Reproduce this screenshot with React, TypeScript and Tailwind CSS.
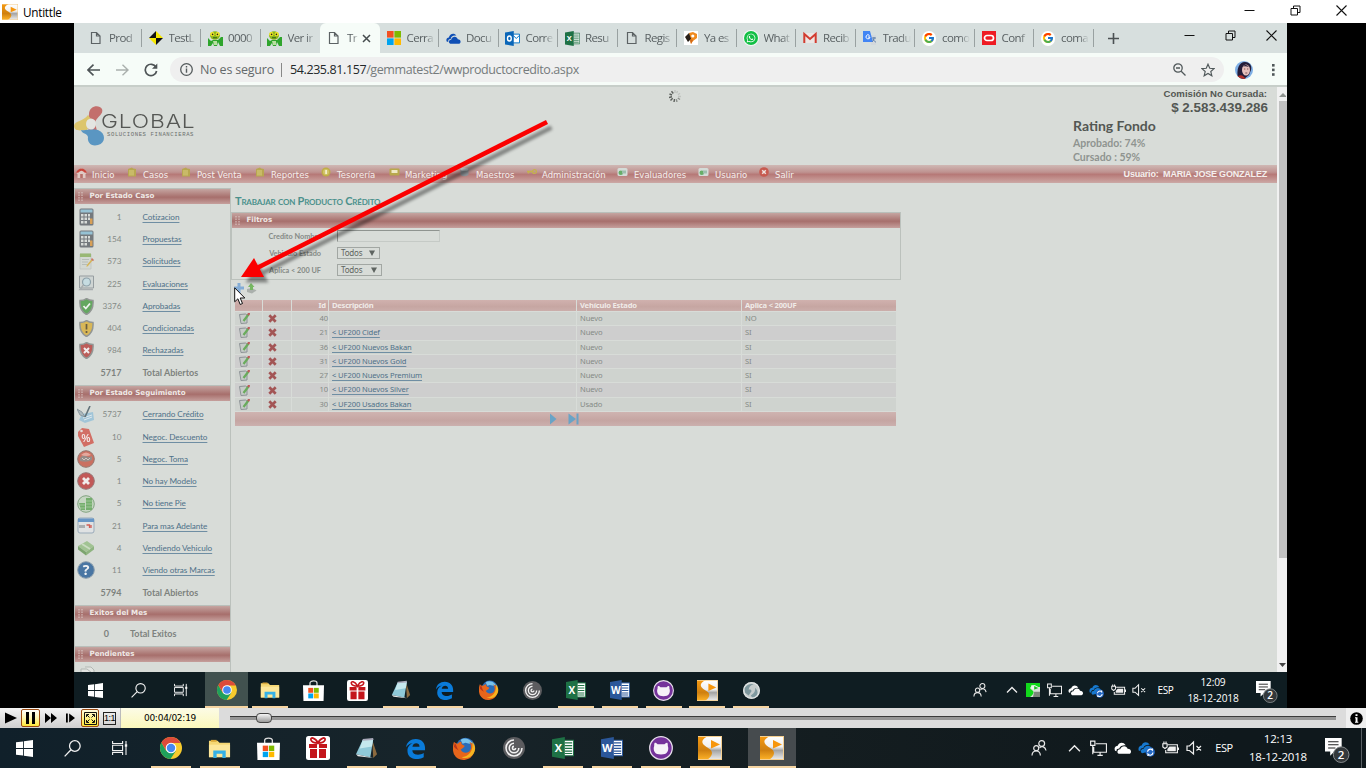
import React from "react";
import { FcGoogle } from "react-icons/fc";
import { FaWhatsapp } from "react-icons/fa";

type IconProps = { size?: number };
type Icon = (p: IconProps) => React.ReactElement;

const svg = (size: number, box: string, children: React.ReactNode, extra = "") => (
  <svg width={size} height={size} viewBox={box} className={`block shrink-0 ${extra}`}>
    {children}
  </svg>
);

/* ---------- application icons ---------- */

const RecorderIcon: Icon = ({ size = 24 }) =>
  svg(size, "0 0 24 24", (
    <>
      <defs>
        <linearGradient id="rg" x1="0" y1="0" x2="0" y2="1">
          <stop offset="0" stopColor="#ffffff" />
          <stop offset=".45" stopColor="#f0f0f0" />
          <stop offset=".6" stopColor="#a4a4a4" />
          <stop offset="1" stopColor="#f0f0f0" />
        </linearGradient>
        <linearGradient id="ro" x1="0" y1="0" x2="0" y2="1">
          <stop offset="0" stopColor="#f79a10" />
          <stop offset=".6" stopColor="#cf8010" />
          <stop offset="1" stopColor="#ffb428" />
        </linearGradient>
      </defs>
      <rect width="24" height="24" fill="url(#rg)" />
      <path d="M0 0H10C4 3 3 6 6 9c3 3 8 4 8 8 0 3-3 6-6 7H0z" fill="url(#ro)" />
      <path d="M13 4l9 4.500-9 4z" fill="#f7960c" />
      <path d="M0 .5h24M0 23.500h24M23.500 0v24" stroke="#f5cf90" strokeWidth="1" />
    </>
  ));

const GreenRecorder: Icon = ({ size = 14 }) =>
  svg(size, "0 0 24 24", (
    <>
      <rect width="24" height="24" fill="#d9e0d9" />
      <path d="M0 0H24V7h-4l-5-3-5 1-3 3c0 3 6 4 6 8 0 3-3 6-6 8H0z" fill="#12d81c" />
      <path d="M9 4h6l6 3-6 5-6-2z" fill="#eef6ee" />
      <path d="M14 5l7 3.500-7 3z" fill="#18c022" />
      <path d="M14 15h10v9H12z" fill="#7b857b" />
    </>
  ));

const WindowsIcon: Icon = ({ size = 16 }) =>
  svg(size, "0 0 16 16", (
    <path d="M0 2.200l6.600-.9v6.200H0zM7.400 1.200L16 0v7.500H7.400zM0 8.400h6.600v6.300L0 13.800zM7.400 8.400H16V16l-8.600-1.200z" fill="#fff" />
  ));

const SearchGlyph: Icon = ({ size = 16 }) =>
  svg(size, "0 0 16 16", (
    <g fill="none" stroke="#f2f2f2" strokeWidth="1.200">
      <circle cx="10.200" cy="5.600" r="5" />
      <path d="M6.600 9.200L.6 15.400" />
    </g>
  ));

const TaskViewGlyph: Icon = ({ size = 16 }) =>
  svg(size, "0 0 16 16", (
    <g fill="none" stroke="#f2f2f2" strokeWidth="1.100">
      <path d="M.6 1v2.500h10V1M.6 15v-2.500h10V15M.6 5.200h10v5.400H.6zM14 1v14" />
      <path d="M12.800 5.500h2.400" strokeWidth="2.400" />
    </g>
  ));

const ChromeIcon: Icon = ({ size = 22 }) =>
  svg(size, "0 0 24 24", (
    <>
      <circle cx="12" cy="12" r="12" fill="#f7cb2d" />
      <path d="M1.600 6A12 12 0 0 0 11.500 24L17 15.500 12 12 7 15.500z" fill="#1fa05c" />
      <path d="M12 0A12 12 0 0 1 22.400 6.500H12L6.800 15 1.600 6A12 12 0 0 1 12 0z" fill="#dd4b3a" />
      <circle cx="12" cy="12" r="5.800" fill="#fff" />
      <circle cx="12" cy="12" r="4.600" fill="#4688f1" />
    </>
  ));

const FolderIcon: Icon = ({ size = 22 }) =>
  svg(size, "0 0 24 24", (
    <>
      <path d="M1 4h9l2 2h11v15H1z" fill="#f5d774" />
      <path d="M1 8h22v13H1z" fill="#fde79a" />
      <path d="M3 3h6v2H3z" fill="#dba93a" />
      <path d="M5.500 22v-8h13v8h-3.500v-4.500h-6V22z" fill="#35b1e6" />
    </>
  ));

const StoreIcon: Icon = ({ size = 23 }) =>
  svg(size, "0 0 24 24", (
    <>
      <path d="M8 7V3.500C8 .3 16 .3 16 3.500V7" fill="none" stroke="#ddd" strokeWidth="1.400" />
      <path d="M0 6h24l-.5 18H.5z" fill="#fff" />
      <path d="M6 9h5.600v5.600H6z" fill="#f25022" />
      <path d="M12.400 9H18v5.600h-5.600z" fill="#7fba00" />
      <path d="M6 15.400h5.600V21H6z" fill="#00a4ef" />
      <path d="M12.400 15.400H18V21h-5.600z" fill="#ffb900" />
    </>
  ));

const GiftIcon: Icon = ({ size = 24 }) =>
  svg(size, "0 0 24 24", (
    <>
      <rect width="24" height="24" rx="2.500" fill="#fff" />
      <path d="M3 8h8v4H3zM13 8h8v4h-8zM4 13h7v9H4zM13 13h7v9h-7z" fill="#c4161c" />
      <path d="M12 7C9 1 4 1 5 4s4 3 7 3c3 0 6 0 7-3s-4-3-7 3z" fill="none" stroke="#c4161c" strokeWidth="1.800" />
    </>
  ));

const NotepadIcon: Icon = ({ size = 22 }) =>
  svg(size, "0 0 24 24", (
    <>
      <path d="M18 3l5 15-4 4z" fill="#8b6a3f" />
      <path d="M8 3l11-1-3 19-15-3z" fill="#8fc9d8" />
      <path d="M8 3l11-1-1.300 8L5 12z" fill="#c5e8ee" />
      <path d="M1 18l15 3 3 1-16-2z" fill="#e8e8e8" />
      <path d="M8 2l11-1v2L8 4z" fill="#aab" />
    </>
  ));

const EdgeIcon: Icon = ({ size = 22 }) =>
  svg(size, "0 0 24 24", (
    <path d="M1.200 10.700C2 4.500 6.500 1 12.300 1c7 0 10.600 5 10.600 10.200v2.800H8.400c.2 6.200 8.600 6 13 3.200v4.700C14 26.300 2.800 24.200 2.800 14.500c0-4.200 2.700-7.300 6-8.700C5.500 6.300 2.900 7.900 1.200 10.700zM8.500 9.900h8.100c0-5.200-7.500-4.900-8.100 0z" fill="#0a7bd9" />
  ));

const FirefoxIcon: Icon = ({ size = 23 }) =>
  svg(size, "0 0 24 24", (
    <>
      <circle cx="13" cy="10.500" r="9.800" fill="#2a6cb8" />
      <path d="M8 3c4-3 10-1 12 3l-3 1-4-1-3 1z" fill="#79c3ea" />
      <path d="M1 5c1 1 2 2 4 2 1-1 2-2 4-2-1 2 0 3 3 4 1 1-2 3-4 4 2 4 6 4 9 2 3-3 2-7 0-10 5 2 6 7 5 11a11.500 11.500 0 0 1-21 2C-1 13 0 8 1 5z" fill="#e7651b" />
      <path d="M20 5c4 4 4 9 1 13s-8 5-12 3c7 0 13-7 11-16z" fill="#f6b420" />
      <path d="M2 6c2 3 2 6 4 8-2-1-4-2-5-4z" fill="#b8341b" />
    </>
  ));

const SwirlIcon: Icon = ({ size = 22 }) =>
  svg(size, "0 0 24 24", (
    <>
      <circle cx="12" cy="12" r="12" fill="#5c5c5f" />
      <path d="M12 3.300a8.700 8.700 0 1 0 8.700 8.700M12 6.800a5.200 5.200 0 1 0 5.200 5.200M12 10.200a1.800 1.800 0 1 0 1.800 1.800" fill="none" stroke="#f2f2f2" strokeWidth="1.700" />
    </>
  ));

const OfficeIcon = (letter: string, color: string, dark: string): Icon =>
  function Office({ size = 22 }) {
    return svg(size, "0 0 24 24", (
      <>
        <path d="M12 3.500h11.500v17H12z" fill="#fff" stroke={color} strokeWidth="1.200" />
        <path d="M14 6.500h8M14 9.500h8M14 12.500h8M14 15.500h8M14 18h8" stroke={color} strokeWidth="1.300" />
        <path d="M0 2.500L14 0v24L0 21.500z" fill={dark} />
        <text x="7" y="16.500" textAnchor="middle" fontSize="12" fontWeight="700" fontFamily="Open Sans, sans-serif" fill="#fff">{letter}</text>
      </>
    ));
  };
const ExcelIcon = OfficeIcon("X", "#217346", "#1e7145");
const WordIcon = OfficeIcon("W", "#2b579a", "#2b579a");
const OutlookIcon: Icon = ({ size = 15 }) =>
  svg(size, "0 0 24 24", (
    <>
      <path d="M12 5h11.300v14H12z" fill="#fff" stroke="#0072c6" strokeWidth="1.500" />
      <path d="M13 7l5 5 5-5" fill="none" stroke="#0072c6" strokeWidth="1.600" />
      <path d="M0 2.500L14 0v24L0 21.500z" fill="#0a66b8" />
      <ellipse cx="7" cy="12" rx="3" ry="4" fill="none" stroke="#fff" strokeWidth="2.200" />
    </>
  ));

const GitHubIcon: Icon = ({ size = 24 }) =>
  svg(size, "0 0 24 24", (
    <>
      <circle cx="12" cy="12" r="11.300" fill="#75329b" stroke="#e5dcea" strokeWidth="1.300" />
      <path d="M5.500 7c1-.5 2 .3 3 1.200h7c1-1 2-1.700 3-1.200.4 1 .3 2 .3 3 1 2 .6 7-3 8-2 .6-5.600.6-7.600 0-3.600-1-4-6-3-8 0-1-.1-2 .3-3z" fill="#f6f2f8" />
    </>
  ));

const GlobeIcon: Icon = ({ size = 18 }) =>
  svg(size, "0 0 24 24", (
    <>
      <circle cx="12" cy="12" r="12" fill="#c6cccc" />
      <path d="M2 9c3-5 8-7 13-6-4 1-7 4-7 8 2-1 4 0 4 2l-4 6-5-4z" fill="#7d969c" />
      <path d="M11 19c5-3 7-7 6-11 6 5 4 13-4 14z" fill="#7f999f" />
      <circle cx="12" cy="12" r="11" fill="none" stroke="#e1e5e5" strokeWidth="1.500" />
    </>
  ));

/* ---------- tray icons ---------- */

const PeopleGlyph: Icon = ({ size = 14 }) =>
  svg(size, "0 0 16 16", (
    <g fill="none" stroke="#e8e8e8" strokeWidth="1.200">
      <circle cx="10.700" cy="3.500" r="2.900" />
      <circle cx="5.200" cy="8.200" r="2.500" />
      <path d="M8.500 8c2-2.500 6-1.500 6.500 2.500M1 15.500c.3-6 8-6 8.400 0" />
    </g>
  ));
const ChevronGlyph: Icon = ({ size = 12 }) =>
  svg(size, "0 0 12 12", <path d="M1 8.500l5-5 5 5" fill="none" stroke="#eee" strokeWidth="1.300" />);
const MonitorGlyph: Icon = ({ size = 15 }) =>
  svg(size, "0 0 16 16", (
    <g fill="none" stroke="#eee" strokeWidth="1.100">
      <path d="M5.500 3.500h10v8h-12v-5M7 14.500h5M9.500 11.500v3M.6 1h4v4h-4zM2.600 5v8.500" />
    </g>
  ));
const CloudGlyph: Icon = ({ size = 15 }) =>
  svg(size, "0 0 16 16", (
    <>
      <path d="M1 10C-.5 7 2 5.500 3.500 5.500 4.500 2 9 1.500 11 5c-4 0-5 1-6 3-2 0-3 1-2.500 2.500z" fill="#fff" />
      <path d="M4.500 13c-2.500-1-1-4.500 1.300-4.200C7 4.800 12 5 12.800 8.200c4 0 4 4.500 1.400 4.800z" fill="#fff" />
    </>
  ));
const OneDriveSync: Icon = ({ size = 16 }) =>
  svg(size, "0 0 16 16", (
    <>
      <path d="M.8 10C-.5 7 2 5 3.500 5.200 4.500 1.500 9 1 11 4.500c-4 0-5 1-6 3-2 0-3 1-2.500 2.500z" fill="#1779cf" />
      <path d="M4 12.500c-2.500-1-1-4.500 1.300-4.200C6.500 4.500 12 4.500 12.800 7.700l2 2z" fill="#1779cf" />
      <circle cx="11.500" cy="11.300" r="4.400" fill="#2368c4" />
      <path d="M9 11a2.600 2.600 0 0 1 4.500-1.500V8M14 11.700a2.600 2.600 0 0 1-4.600 1.700V15" fill="none" stroke="#fff" strokeWidth="1.100" />
    </>
  ));
const BatteryGlyph: Icon = ({ size = 16 }) =>
  svg(size, "0 0 16 16", (
    <>
      <path d="M5.500 4.500h9v7.500h-11v-2.500M.8 3.500h4v3l-2 1.500-2-1.500zM1.800 3.500V1.500M3.800 3.500V1.500M15.600 7v2.500" fill="none" stroke="#eee" strokeWidth="1.100" />
      <path d="M7 6h6v4.500H5V8.500z" fill="#eee" />
    </>
  ));
const MutedGlyph: Icon = ({ size = 15 }) =>
  svg(size, "0 0 16 16", (
    <path d="M1 6h2.500L7.500 2v12L3.500 10.500H1zM10.500 6l4.500 4.500M15 6l-4.500 4.500" fill="none" stroke="#eee" strokeWidth="1.200" />
  ));
const NotificationGlyph: Icon = ({ size = 24 }) =>
  svg(size, "0 0 24 24", (
    <>
      <path d="M0 0h16v13H9l-4 4v-4H0z" fill="#fff" />
      <path d="M3 3.500h10M3 6.500h10M3 9.500h7" stroke="#222" strokeWidth="1" />
      <circle cx="15.500" cy="16" r="7.500" fill="#33383b" stroke="#8b9092" strokeWidth=".9" />
      <text x="15.500" y="20" textAnchor="middle" fontSize="11" fontWeight="600" fontFamily="Open Sans, sans-serif" fill="#fff">2</text>
    </>
  ));

/* ---------- tab icons ---------- */

const DocIcon: Icon = () =>
  svg(14, "0 0 14 14", <path d="M2.500 1.500h5l3.500 3.500v7.500H2.500zM7.500 1.500V5H11" fill="none" stroke="#5c6264" strokeWidth="1.200" />);
const TargetIcon: Icon = () =>
  svg(14, "0 0 14 14", (
    <>
      <path d="M7 0l7 7H7z" fill="#f6e800" /><path d="M7 0v7H0z" fill="#111" />
      <path d="M0 7h7v7z" fill="#f6e800" /><path d="M7 7h7l-7 7z" fill="#111" />
    </>
  ));
const MantisIcon: Icon = () =>
  svg(15, "0 0 15 15", (
    <>
      <path d="M0 7l3 3 2-1h5l3-3 2 0v9h-3l-2-4-1 4H6l-1-3-2 3H0z" fill="#2fa52d" />
      <path d="M5 10h4v4H6z" fill="#b8e0a0" />
      <ellipse cx="7" cy="4.500" rx="5" ry="4.200" fill="#8db81c" />
      <circle cx="4.300" cy="3.200" r="2.100" fill="#f0e629" /><circle cx="9.700" cy="3.200" r="2.100" fill="#f0e629" />
      <circle cx="4.600" cy="3.400" r=".8" fill="#222" /><circle cx="9.400" cy="3.400" r=".8" fill="#222" />
      <path d="M5 6.800h4" stroke="#2b5c18" strokeWidth="1" />
    </>
  ));
const MicrosoftIcon: Icon = () =>
  svg(14, "0 0 14 14", (
    <>
      <path d="M0 0h6.600v6.600H0z" fill="#f25022" /><path d="M7.400 0H14v6.600H7.400z" fill="#7fba00" />
      <path d="M0 7.400h6.600V14H0z" fill="#00a4ef" /><path d="M7.400 7.400H14V14H7.400z" fill="#ffb900" />
    </>
  ));
const OneDriveTab: Icon = () =>
  svg(15, "0 0 16 16", (
    <>
      <path d="M1 11.500C-.5 9 1 7 3 7 4 2.500 9 1.500 11 5c-4-.5-5.500 1-6 3.500-2 0-3 1.500-2.500 3z" fill="#0f4fb5" />
      <path d="M4.500 13.500c-2.500-1-1.500-4.500 1-4.200C6.500 5 12 5.500 12.500 8.800c3.500 0 4 4 1.500 4.700z" fill="#0f4fb5" />
    </>
  ));
const FoxIcon: Icon = () =>
  svg(14, "0 0 14 14", (
    <>
      <path d="M0 0h14v14H0z" fill="#fff" />
      <path d="M5 2l4-1 4 2v4l-4 3-2 3-1-3z" fill="#f08a1d" />
      <path d="M1 6l4-4 1 3 1 3-3 3z" fill="#292018" />
      <path d="M6 8l3 1-2 4z" fill="#d06818" />
      <circle cx="8.800" cy="5" r="1.600" fill="#fff" />
    </>
  ));
const WhatsAppTab: Icon = () => (
  <span className="flex size-[14px] items-center justify-center rounded-full bg-[#12bf45] ring-1 ring-white/80">
    <FaWhatsapp size={10} color="#fff" />
  </span>
);
const GmailIcon: Icon = () =>
  svg(14, "0 0 14 14", (
    <>
      <path d="M1 2h12v10H1z" fill="#ece6e4" />
      <path d="M1.300 12V3L7 8l5.700-5v9" fill="none" stroke="#d23c30" strokeWidth="2" />
    </>
  ));
const TranslateIcon: Icon = () =>
  svg(14, "0 0 14 14", (
    <>
      <path d="M6 4h7v10H8z" fill="#d3d8dc" />
      <path d="M0 0h7l3 11H0z" fill="#4285f4" />
      <path d="M9 7h4M11 6v1c0 2-1 3-2 4M10 8c1 2 2 3 3 3" stroke="#5d7fa8" fill="none" />
      <path d="M6.500 4.500A2 2 0 1 0 7 6H5" fill="none" stroke="#fff" strokeWidth="1" />
    </>
  ));
const GoogleTab: Icon = () => (
  <span className="flex size-[15px] items-center justify-center rounded-full bg-white">
    <FcGoogle size={12} />
  </span>
);
const OracleIcon: Icon = () =>
  svg(14, "0 0 14 14", (
    <>
      <path d="M0 0h14v14H0z" fill="#ee1b23" />
      <rect x="2.500" y="4.500" width="9" height="5" rx="2.500" fill="none" stroke="#fff" strokeWidth="1.700" />
    </>
  ));

const tabs: { icon: Icon; label: string; active?: boolean }[] = [
  { icon: DocIcon, label: "Prod" },
  { icon: TargetIcon, label: "TestL" },
  { icon: MantisIcon, label: "0000" },
  { icon: MantisIcon, label: "Ver ir" },
  { icon: DocIcon, label: "Tr", active: true },
  { icon: MicrosoftIcon, label: "Cerra" },
  { icon: OneDriveTab, label: "Docu" },
  { icon: OutlookIcon, label: "Corre" },
  { icon: ExcelIcon, label: "Resu" },
  { icon: DocIcon, label: "Regis" },
  { icon: FoxIcon, label: "Ya es" },
  { icon: WhatsAppTab, label: "What" },
  { icon: GmailIcon, label: "Recib" },
  { icon: TranslateIcon, label: "Tradu" },
  { icon: GoogleTab, label: "como" },
  { icon: OracleIcon, label: "Conf" },
  { icon: GoogleTab, label: "coma" },
];

function WindowButtons({ gap }: { gap: string }) {
  return (
    <div className={`flex items-center ${gap}`}>
      <svg width="11" height="11" viewBox="0 0 11 11"><path d="M.5 5.500h10" stroke="#111" /></svg>
      <svg width="11" height="11" viewBox="0 0 11 11"><path d="M1 3.500h6.500V10H1zM3.500 3.500V1H10v6.500H7.500" fill="none" stroke="#111" /></svg>
      <svg width="11" height="11" viewBox="0 0 11 11"><path d="M.5.500l10 10M10.500.500l-10 10" stroke="#111" strokeWidth="1.100" /></svg>
    </div>
  );
}

function Chrome() {
  return (
    <>
      <div className="flex h-[30px] bg-[#d7dfde] pl-2 font-['Open_Sans',sans-serif]">
        {tabs.map(({ icon: I, label, active }, i) => (
          <div
            key={i}
            className={
              active
                ? "flex h-[30px] w-[59.5px] shrink-0 items-center rounded-t-[6px] bg-[#f6fcf8] pl-[7px]"
                : "flex h-[30px] w-[59.5px] shrink-0 items-center pl-[7px]"
            }
          >
            <span className="flex w-[14px] shrink-0 justify-center"><I size={15} /></span>
            <span className={`${active ? "w-[12px] [mask-image:linear-gradient(to_right,#000_45%,transparent)]" : "w-[28px] [mask-image:linear-gradient(to_right,#000_65%,transparent)]"} ml-[6px] flex h-4 shrink-0 items-center text-[11.500px] tracking-[-0.600px] whitespace-nowrap text-[#5a6163]`}>
              {label}
            </span>
            {active ? (
              <svg width="9" height="9" viewBox="0 0 9 9" className="ml-[3px]"><path d="M1 1l7 7M8 1L1 8" stroke="#454b4d" strokeWidth="1.500" /></svg>
            ) : (
              i !== 3 && <span className="ml-auto h-[18px] w-px bg-[#99a1a1]" />
            )}
          </div>
        ))}
        <svg width="11" height="11" viewBox="0 0 11 11" className="mt-[10px] ml-[14px]"><path d="M5.500 0v11M0 5.500h11" stroke="#4b5153" strokeWidth="1.600" /></svg>
        <div className="mt-[7px] ml-auto mr-[10px] h-[11px]"><WindowButtons gap="gap-[30px]" /></div>
      </div>
      <div className="flex h-[32px] items-center bg-[#f6fcf8] pt-px pr-3 pl-[13px] font-['Open_Sans',sans-serif]">
        <svg width="13" height="12" viewBox="0 0 13 12"><path d="M13 6H1M6.500.700L1 6l5.500 5.300" fill="none" stroke="#4e5456" strokeWidth="1.600" /></svg>
        <svg width="13" height="12" viewBox="0 0 13 12" className="ml-4"><path d="M0 6h12M6.500.700L12 6l-5.500 5.300" fill="none" stroke="#aab0ad" strokeWidth="1.400" /></svg>
        <svg width="14" height="14" viewBox="0 0 14 14" className="ml-[15px]"><path d="M12 4.200A5.700 5.700 0 1 0 12.600 8" fill="none" stroke="#4e5456" strokeWidth="1.700" /><path d="M13.300.500v5.300H8z" fill="#4e5456" /></svg>
        <div className="ml-3 flex h-[25px] w-[1054px] items-center rounded-full bg-[#efefef] pr-[9px] pl-[10px]">
          <svg width="13" height="13" viewBox="0 0 13 13"><circle cx="6.500" cy="6.500" r="5.800" fill="none" stroke="#555b5d" strokeWidth="1.300" /><path d="M6.500 5.500v4.300M6.500 3v1.400" stroke="#555b5d" strokeWidth="1.400" /></svg>
          <span className="mt-px ml-[7px] w-[74px] text-[12.500px] tracking-[-0.200px] whitespace-nowrap text-[#64696b]">No es seguro</span>
          <span className="ml-[7px] h-[14px] w-px bg-[#888]" />
          <span className="mt-px ml-[8px] text-[12.500px] tracking-[-0.400px] whitespace-nowrap text-[#757b7c]"><span className="text-[#232829]">54.235.81.157</span>/gemmatest2/wwproductocredito.aspx</span>
          <svg width="13" height="13" viewBox="0 0 13 13" className="ml-auto"><g fill="none" stroke="#50585a" strokeWidth="1.300"><circle cx="5" cy="5" r="4.200" /><path d="M8.200 8.200L12.500 12.500M3 5h4" /></g></svg>
          <svg width="14" height="14" viewBox="0 0 24 24" className="ml-[15px]"><path d="M12 2l3 7 7.500.600-5.700 5 1.800 7.400L12 18l-6.600 4 1.800-7.400-5.700-5L9 9z" fill="none" stroke="#50585a" strokeWidth="2" /></svg>
        </div>
        <svg width="18" height="18" viewBox="0 0 18 18" className="ml-[11px]">
          <defs><clipPath id="face"><circle cx="9" cy="9" r="9" /></clipPath></defs>
          <g clipPath="url(#face)">
            <rect width="18" height="18" fill="#7fb0e6" />
            <path d="M3 18C1 8 4 1 10 1c5 0 7 4 6 8l-2 5-5 4z" fill="#231c38" />
            <ellipse cx="11" cy="9" rx="4" ry="5.500" fill="#e6c0bd" />
            <path d="M8 5.500q3-3 6 .5-3-1-6-.5z" fill="#231c38" />
            <path d="M9 8h1.300M12 8h1.300M10.300 12h2" stroke="#74494c" strokeWidth=".9" />
            <path d="M3 15c2-1 4-1 5 0l3 3H3z" fill="#b0302a" />
          </g>
        </svg>
        <svg width="3" height="12" viewBox="0 0 3 12" className="ml-auto"><g fill="#50585a"><rect width="2.600" height="2.600" /><rect y="4.600" width="2.600" height="2.600" /><rect y="9.200" width="2.600" height="2.600" /></g></svg>
      </div>
      <div className="h-[2px] bg-[#c7cec9]" />
    </>
  );
}

/* ---------- menu ---------- */

const HomeM = <svg width="11" height="11" viewBox="0 0 11 11"><path d="M0 5.500L5.500 1 11 5.500 9.500 7V11h-8V7z" fill="#dfc9c4" /><path d="M0 6C2 0 9 0 11 6L8.500 5.500Q5.500 2 2.500 5.500z" fill="#c9463c" /><path d="M4.200 7h2.600v4H4.200z" fill="#b8706a" /></svg>;
const NoteM = <svg width="10" height="10" viewBox="0 0 10 10"><path d="M1 2l4-1.500 1 1 3 .5v7.500H1z" fill="#b8a750" /><path d="M2 3h5v5.500H2z" fill="#c9ba68" /></svg>;
const CoinM = <svg width="10" height="10" viewBox="0 0 10 10"><circle cx="5" cy="5" r="4.500" fill="#bfae45" /><circle cx="5" cy="5" r="3" fill="#d2c46a" /><path d="M4.200 3h1.800v4H4.200z" fill="#f3eec8" /></svg>;
const MailM = <svg width="11" height="10" viewBox="0 0 11 10"><rect x=".5" y="1.500" width="10" height="7" rx="1" fill="#b8a84c" /><rect x="2.500" y="3" width="6" height="3" fill="#efe8c4" /></svg>;
const DbM = <svg width="9" height="10" viewBox="0 0 9 10"><path d="M.5 2h8v6q-4 2.500-8 0z" fill="#8f9499" /><ellipse cx="4.500" cy="2.300" rx="4" ry="1.500" fill="#c4c9cc" /></svg>;
const KeyM = <svg width="10" height="10" viewBox="0 0 10 10"><path d="M0 4.500h6M1.500 4.500v2" stroke="#c4b24c" strokeWidth="1.500" /><circle cx="7.500" cy="4.500" r="1.900" fill="none" stroke="#c4b24c" strokeWidth="1.300" /></svg>;
const EvalM = <svg width="11" height="10" viewBox="0 0 11 10"><rect x=".5" y="1" width="10" height="8" rx="1.500" fill="#d4dcd8" /><circle cx="3.800" cy="5.700" r="2.300" fill="#67ad68" /><path d="M5 3.500h4v3H5z" fill="#9dbfae" /></svg>;
const ExitM = <svg width="10" height="10" viewBox="0 0 10 10"><circle cx="5" cy="5" r="4.800" fill="#c75a50" /><path d="M3.200 3.200l3.600 3.600M6.800 3.200L3.200 6.800" stroke="#efe3e0" strokeWidth="1.500" /></svg>;

const menu = [
  { icon: HomeM, label: "Inicio", cell: "w-[51px]", pad: "ml-[5px]" },
  { icon: NoteM, label: "Casos", cell: "w-[54px]", pad: "ml-[6px]" },
  { icon: NoteM, label: "Post Venta", cell: "w-[74px]", pad: "ml-[6px]" },
  { icon: NoteM, label: "Reportes", cell: "w-[66px]", pad: "ml-[6px]" },
  { icon: CoinM, label: "Tesorería", cell: "w-[68px]", pad: "ml-[6px]" },
  { icon: MailM, label: "Marketing", cell: "w-[71px]", pad: "ml-[5px]" },
  { icon: DbM, label: "Maestros", cell: "w-[67px]", pad: "ml-[7px]" },
  { icon: KeyM, label: "Administración", cell: "w-[90px]", pad: "ml-[5px]" },
  { icon: EvalM, label: "Evaluadores", cell: "w-[81px]", pad: "ml-[6px]" },
  { icon: EvalM, label: "Usuario", cell: "w-[61px]", pad: "ml-[6px]" },
  { icon: ExitM, label: "Salir", cell: "w-[40px]", pad: "ml-[6px]" },
];

/* ---------- sidebar icons ---------- */

const CalcS = <svg width="15" height="18" viewBox="0 0 15 18"><rect x=".5" y=".5" width="14" height="17" rx="1.500" fill="#6a6f74" /><rect x="1.500" y="1.500" width="12" height="3" fill="#8fc0d4" /><path d="M2 6h2.500v2.500H2zM5.500 6H8v2.500H5.500zM9 6h2v2.500H9zM2 9.500h2.500V12H2zM5.500 9.500H8V12H5.500zM2 13h2.500v2.500H2zM5.500 13H8v2.500H5.500zM9 9.500h2V12H9z" fill="#d8dcda" /><path d="M11 10.500h2.500V16H11z" fill="#d99a4a" /></svg>;
const FormS = <svg width="15" height="17" viewBox="0 0 15 17"><path d="M1 1h11v15H1z" fill="#d3d8d3" stroke="#bcc2be" strokeWidth=".8" /><path d="M1 .5h11V4H1z" fill="#93b56b" /><path d="M3 6.500h7M3 9h6M3 11.500h5" stroke="#b4bab5" /><path d="M14 7l-5 6-1.500 1 .3-2 5-6z" fill="#d5b14c" /><path d="M15 7l-2-2-1 1.200 2 2z" fill="#c86a5a" /></svg>;
const LensS = <svg width="17" height="17" viewBox="0 0 17 17"><path d="M1.500 1h14v12H1.500z" fill="#cfd5d3" stroke="#8f979a" /><circle cx="8.500" cy="7" r="4" fill="#c5dce2" stroke="#869ba5" strokeWidth="1.200" /><path d="M5.500 10L2 14.500h13" fill="none" stroke="#a3a9ab" strokeWidth="1.600" /></svg>;
const shield = (fill: string, mark: React.ReactNode) => (
  <svg width="15" height="17" viewBox="0 0 15 17"><path d="M7.500.5Q10 2.500 14 2.500c.5 6-1 11-6.500 14C2 13.500.5 8.500 1 2.500 5 2.500 6 1.500 7.500.5z" fill={fill} stroke="#8b8f8d" strokeWidth="1.500" />{mark}</svg>
);
const OkS = shield("#58a254", <path d="M4.500 8l2.300 2.500L11 5.500" fill="none" stroke="#f3f6f3" strokeWidth="1.800" />);
const WarnS = shield("#d8b34a", <path d="M7.500 4v5.500M7.500 11v2" stroke="#5d5030" strokeWidth="1.700" />);
const BadS = shield("#b9504c", <path d="M5 6l5 5M10 6l-5 5" stroke="#f5eeee" strokeWidth="2" />);
const PenS = <svg width="18" height="17" viewBox="0 0 18 17"><path d="M5 8l11-2 1 8-9 3-6-3z" fill="#9cc3d8" /><path d="M6 12l9-3M7 14l8-3" stroke="#dfeaf0" /><path d="M0 3l5 3 3 5-5-2z" fill="#a9b6bc" stroke="#75858d" strokeWidth=".8" /><path d="M13 0L8 11" stroke="#56676f" strokeWidth="1.600" /></svg>;
const TagS = <svg width="18" height="20" viewBox="0 0 18 20"><path d="M1 5l4-4 7 1 5 14-10 4L1 9z" fill="#d26459" /><circle cx="4.500" cy="4" r="1.300" fill="#e7dedb" /><text x="9" y="14.500" textAnchor="middle" fontSize="10" fontWeight="700" fontFamily="Liberation Sans, sans-serif" fill="#f5eceb">%</text></svg>;
const BallS = <svg width="18" height="18" viewBox="0 0 18 18"><circle cx="9" cy="9" r="8.300" fill="#c96555" stroke="#8d6b63" /><path d="M3 8q3-4 6-2t6 0v4q-5 3-12 1z" fill="#918480" /><path d="M5 8l2 2 2-2 2 2 2-2" fill="none" stroke="#cfc5c0" /><path d="M4 5Q9 0 14 5 9 7 4 5z" fill="#e7a397" /></svg>;
const CrossS = <svg width="18" height="18" viewBox="0 0 18 18"><circle cx="9" cy="9" r="8.300" fill="#c04b4b" stroke="#8f6a6a" /><path d="M6 6l6 6M12 6l-6 6" stroke="#f3eeee" strokeWidth="2.800" /></svg>;
const BillsS = <svg width="18" height="18" viewBox="0 0 18 18"><circle cx="9" cy="9" r="8.300" fill="#c3d6c0" stroke="#799d77" /><path d="M2 8h6v7H4zM9 3h6v12H9z" fill="#6aaa62" /><path d="M2 10h6M9 6h7M9 9h7M9 12h6M3 13h5" stroke="#a3cc9c" strokeWidth=".8" /></svg>;
const CalS = <svg width="18" height="17" viewBox="0 0 18 17"><rect x="1" y="1" width="16" height="15" rx="2" fill="#e0e3e5" stroke="#93a5b5" /><path d="M1 1.500h16V5H1z" fill="#5b8fc4" /><path d="M3 8v3M5 8v3M7 8v3" stroke="#6a7075" /><path d="M9.500 8h3v3M14 8v3" fill="none" stroke="#cf5148" strokeWidth="1.300" /></svg>;
const CashS = <svg width="18" height="16" viewBox="0 0 18 16"><path d="M1 6l9-5 7 5-8 6z" fill="#9cc18c" /><path d="M1 6l8 6v3.500L1 9.500z" fill="#739f64" /><path d="M9 12l8-6v3.500l-8 6z" fill="#86b077" /><path d="M5 4l8 5" stroke="#c9dcbf" strokeWidth="1.800" /></svg>;
const HelpS = <svg width="18" height="18" viewBox="0 0 18 18"><circle cx="9" cy="9" r="8.300" fill="#3a6c9e" stroke="#8397a8" /><text x="9" y="14" textAnchor="middle" fontSize="14" fontWeight="700" fontFamily="Open Sans, sans-serif" fill="#f4f6f8">?</text></svg>;

type Row = { icon: React.ReactNode; n: string; label: string };
const caso: Row[] = [
  { icon: CalcS, n: "1", label: "Cotizacion" },
  { icon: CalcS, n: "154", label: "Propuestas" },
  { icon: FormS, n: "573", label: "Solicitudes" },
  { icon: LensS, n: "225", label: "Evaluaciones" },
  { icon: OkS, n: "3376", label: "Aprobadas" },
  { icon: WarnS, n: "404", label: "Condicionadas" },
  { icon: BadS, n: "984", label: "Rechazadas" },
];
const seguimiento: Row[] = [
  { icon: PenS, n: "5737", label: "Cerrando Crédito" },
  { icon: TagS, n: "10", label: "Negoc. Descuento" },
  { icon: BallS, n: "5", label: "Negoc. Toma" },
  { icon: CrossS, n: "1", label: "No hay Modelo" },
  { icon: BillsS, n: "5", label: "No tiene Pie" },
  { icon: CalS, n: "21", label: "Para mas Adelante" },
  { icon: CashS, n: "4", label: "Vendiendo Vehiculo" },
  { icon: HelpS, n: "11", label: "Viendo otras Marcas" },
];

function PanelHeader({ title }: { title: string }) {
  return (
    <div className="flex h-[16px] shrink-0 items-start border-t border-[#b9bfba] bg-[linear-gradient(to_bottom,#c5a5a1,#a76f6c_55%,#c59f9c)] pl-[3px] font-['DejaVu_Sans',sans-serif]">
      <svg width="5" height="10" viewBox="0 0 5 10" className="mt-[3px]"><path d="M1 0v10M4 0v10" stroke="#dccbc8" strokeWidth="1" strokeDasharray="1.500 1" /></svg>
      <span className="ml-[6.500px] text-[7.100px] leading-[13px] font-bold whitespace-nowrap text-[#efe9e6]">{title}</span>
    </div>
  );
}

function SideRows({ rows, total }: { rows: Row[]; total: string }) {
  return (
    <>
      {rows.map((r) => (
        <div key={r.label} className="flex h-[22.250px] shrink-0 items-center">
          <span className="flex w-[22px] items-center justify-center opacity-90">{r.icon}</span>
          <span className="w-[24.500px] text-right text-[8.200px] text-[#858a86]">{r.n}</span>
          <span className="ml-[21px] text-[8.200px] tracking-[-0.080px] whitespace-nowrap text-[#4e7189] underline decoration-[#6f8ea3] underline-offset-2">{r.label}</span>
        </div>
      ))}
      <div className="flex h-[22.250px] shrink-0 items-center text-[9px] font-bold text-[#7d827e]">
        <span className="w-[46.500px] text-right">{total}</span>
        <span className="ml-[21px]">Total Abiertos</span>
      </div>
    </>
  );
}

function Sidebar() {
  return (
    <div className="flex h-[484px] w-[157px] shrink-0 flex-col overflow-hidden border-x border-[#bbc1bc] font-['Lato',sans-serif]">
      <PanelHeader title="Por Estado Caso" />
      <div className="h-[2px] shrink-0" />
      <SideRows rows={caso} total="5717" />
      <div className="h-px shrink-0" />
      <PanelHeader title="Por Estado Seguimiento" />
      <div className="h-[2.500px] shrink-0" />
      <SideRows rows={seguimiento} total="5794" />
      <div className="h-[1.500px] shrink-0" />
      <PanelHeader title="Exitos del Mes" />
      <div className="flex h-[25px] shrink-0 items-center text-[9px] font-bold text-[#7d827e]">
        <span className="w-[34px] text-right">0</span>
        <span className="ml-[21px]">Total Exitos</span>
      </div>
      <PanelHeader title="Pendientes" />
      <svg width="16" height="12" viewBox="0 0 16 12" className="mt-[4px] ml-[5px] shrink-0"><path d="M1 3h6l5 4v8H1zM5 1h6l3 3v8" fill="#e2e4e1" stroke="#b3b8b4" /></svg>
    </div>
  );
}

/* ---------- product table ---------- */

const EditT = <svg width="11" height="11" viewBox="0 0 11 11"><path d="M.5 1.500l6-.5 1.500 1v8L2 10.500z" fill="#c6cbc8" stroke="#8d9396" /><path d="M9.500 1.500L4.500 8" stroke="#69ab5c" strokeWidth="2.200" /><path d="M10.500 0L9 2" stroke="#bd5b5b" strokeWidth="2.200" /></svg>;
const DelT = <svg width="9" height="9" viewBox="0 0 9 9"><path d="M1.300 1.300l6.400 6.400M7.700 1.300L1.300 7.700" stroke="#a35555" strokeWidth="2.700" /></svg>;

const products = [
  ["40", "", "Nuevo", "NO"],
  ["21", "< UF200 Cidef", "Nuevo", "SI"],
  ["36", "< UF200 Nuevos Bakan", "Nuevo", "SI"],
  ["31", "< UF200 Nuevos Gold", "Nuevo", "SI"],
  ["27", "< UF200 Nuevos Premium", "Nuevo", "SI"],
  ["10", "< UF200 Nuevos Silver", "Nuevo", "SI"],
  ["30", "< UF200 Usados Bakan", "Usado", "SI"],
];

const gridCols = "grid grid-cols-[27px_28px_36.500px_247px_164px_154px] gap-x-px";

function ProductTable() {
  return (
    <div className="ml-[3.500px] w-[661.500px] font-['Noto_Sans',sans-serif] text-[7.600px] tracking-[-0.100px]">
      <div className={`${gridCols} h-[11px] font-bold text-[#f0ebe8] *:flex *:items-center *:bg-[linear-gradient(to_bottom,#d0b1ae,#c6a6a2_60%,#cbaeab)]`}>
        <span /><span />
        <span className="justify-end pr-[2px]">Id</span>
        <span className="pl-[3px] tracking-[-0.250px]">Descripción</span>
        <span className="pl-[3px] tracking-[-0.200px]">Vehículo Estado</span>
        <span className="pl-[3px] tracking-[-0.200px]">Aplica &lt; 200UF</span>
      </div>
      {products.map(([id, name, estado, aplica], i) => (
        <div key={id} className={`${gridCols} mt-px h-[13.300px] text-[#858a86] *:flex *:items-center ${i % 2 ? "*:bg-[#cecece]" : "*:bg-[#cfd3cf]"}`}>
          <span className="pl-[4px]">{EditT}</span>
          <span className="pl-[5px]">{DelT}</span>
          <span className="justify-end">{id}</span>
          <span className="pl-[3px] text-[#4e7189]"><span className="underline decoration-[#6f8ea3] underline-offset-2">{name}</span></span>
          <span className="pl-[3px]">{estado}</span>
          <span className="pl-[3px]">{aplica}</span>
        </div>
      ))}
      <div className="mt-px flex h-[14px] items-center bg-[linear-gradient(to_bottom,#cfb4b1,#c5a5a2_60%,#cbb0ae)] pl-[314px]">
        <svg width="8" height="12" viewBox="0 0 8 12"><path d="M1 .5L7.500 6 1 11.500z" fill="#69a3c6" /></svg>
        <svg width="11" height="12" viewBox="0 0 11 12" className="ml-[11px]"><path d="M.5.5L8 6 .5 11.500z" fill="#69a3c6" /><path d="M9.500.5v11" stroke="#69a3c6" strokeWidth="2" /></svg>
      </div>
    </div>
  );
}

function FilterRow({ label, children }: { label: string; children: React.ReactNode }) {
  return (
    <div className="flex h-[17px] items-center">
      <span className="mt-[2px] w-[89px] text-right font-['Lato',sans-serif] text-[7.300px] font-bold text-[#858a86]">{label}</span>
      <span className="mb-[2px] ml-[16px] flex">{children}</span>
    </div>
  );
}

function Select({ wide }: { wide?: boolean }) {
  return (
    <span className={`${wide ? "w-[45px]" : "w-[43px]"} flex h-[12px] items-center justify-between border border-[#a2a7a3] pr-[4px] pl-[3px] font-['Noto_Sans',sans-serif] text-[8px] tracking-[-0.200px] text-[#5e6460]`}>
      Todos
      <svg width="6" height="6" viewBox="0 0 6 6"><path d="M0 .5h6L3 6z" fill="#5e6460" /></svg>
    </span>
  );
}

function MainPanel() {
  return (
    <div className="w-[1046px]">
      <div className="h-[24px] pt-[6px] pl-[4px] font-['Lato',sans-serif] text-[11px] leading-[14px] font-bold tracking-[-0.200px] whitespace-nowrap text-[#4b918c] [font-variant:small-caps]">
        Trabajar con Producto Crédito
      </div>
      <div className="h-[68px] w-[670px] border border-t-0 border-[#bbc1bc]">
        <PanelHeader title="Filtros" />
        <div>
          <FilterRow label="Credito Nombre"><span className="h-[12px] w-[103px] border border-[#c5cac6] border-t-[#8f9490] border-l-[#8f9490]" /></FilterRow>
          <FilterRow label="Vehiculo Estado"><Select /></FilterRow>
          <FilterRow label="Aplica < 200 UF"><Select wide /></FilterRow>
        </div>
      </div>
      <div className="flex h-[20px] items-center pb-[4px] pl-[3px]">
        <svg width="10" height="10" viewBox="0 0 10 10"><path d="M3.500 0h3v3.500H10v3H6.500V10h-3V6.500H0v-3h3.500z" fill="#83acd6" /></svg>
        <svg width="11" height="11" viewBox="0 0 11 11" className="ml-[2px]"><path d="M1 6l5-1 4.500 2.500L6 10.500 1 9z" fill="#aab0ac" /><path d="M5 0l3.500 4H7v3H4V4H2z" fill="#76b862" /></svg>
      </div>
      <ProductTable />
    </div>
  );
}

function PageBody() {
  return (
    <div className="flex h-[585px] bg-[#d8dcd8]">
      <div className="w-[1203px] shrink-0">
        <div className="flex h-[78px] justify-between">
          <div className="flex pt-[18px]">
            <svg width="32" height="42" viewBox="0 0 32 42" className="shrink-0">
              <path d="M15 9C15 1 25-1 28 4c2 6-6 8-7 14l2 8-8-1-5-6c3-3 5-6 5-10z" fill="#c36f6c" />
              <path d="M0 21c1-6 9-4 14-11l5 7-7 9c-4-2-11 2-12-5z" fill="#dcc56c" />
              <path d="M7 25c6 1 9-2 17 0 8 3 8 13 0 15-7 2-11-3-10-8-1-4-6-3-7-7z" fill="#5a96c2" />
              <ellipse cx="17" cy="19" rx="5" ry="5.500" fill="#e3e5e1" />
            </svg>
            <div className="-ml-[5px] pt-[7px] font-['Inter',sans-serif]">
              <div className="w-[80px] origin-left scale-x-[1.200] text-[19px] leading-[20px] font-light tracking-[0.700px] text-[#555754]">GLOBAL</div>
              <div className="ml-[6px] font-['Liberation_Mono',monospace] text-[5.600px] leading-[6px] tracking-[0.600px] whitespace-nowrap text-[#6c706d]">SOLUCIONES FINANCIERAS</div>
            </div>
          </div>
          <div className="mr-[9px] w-[196px] pt-px font-['Liberation_Sans',sans-serif] font-bold text-[#535753]">
            <div className="text-right text-[9.600px] leading-[12px]"><span className="mr-px">Comisión No Cursada:</span></div>
            <div className="text-right text-[13.400px] leading-[15px]">$ 2.583.439.286</div>
            <div className="mt-[2px] ml-px font-['Lato',sans-serif] text-[14px] leading-[18px]">Rating Fondo</div>
            <div className="mt-px ml-px font-['Lato',sans-serif] text-[10.500px] leading-[14px] text-[#8f9490]">Aprobado: 74%</div>
            <div className="ml-px font-['Lato',sans-serif] text-[10.500px] leading-[14px] text-[#8f9490]">Cursado : 59%</div>
          </div>
        </div>
        <div className="flex h-[18px] bg-[linear-gradient(to_bottom,#cfb8b4,#bf9290_40%,#b67977_52%,#c49491_80%,#cba9a6)] pl-[2px] font-['DejaVu_Sans',sans-serif] text-[8.500px] text-[#f4f0ee]">
          {menu.map((m) => (
            <div key={m.label} className={`${m.cell} flex shrink-0`}>
              <span className="mt-[2px] h-[11px] shrink-0">{m.icon}</span>
              <span className={`${m.pad} mt-[5px] leading-[11px] whitespace-nowrap`}>{m.label}</span>
            </div>
          ))}
          <div className="mt-[4px] mr-[10px] ml-auto font-['Liberation_Sans',sans-serif] text-[9px] leading-[11px] font-bold tracking-[-0.200px] whitespace-pre">Usuario:  MARIA JOSE GONZALEZ</div>
        </div>
        <div className="flex pt-[5px]">
          <Sidebar />
          <MainPanel />
        </div>
      </div>
      <div className="flex w-[10px] flex-col items-center justify-between bg-[#f1f1f1]">
        <svg width="8" height="14" viewBox="0 0 8 14"><path d="M1 10l4-4 3 3v1z" fill="#8f9490" /></svg>
        <div className="mb-auto ml-[2px] h-[457px] w-[8px] bg-[#c1c1c1]" />
        <svg width="8" height="12" viewBox="0 0 8 12"><path d="M1 3h7L4.500 7z" fill="#444" /></svg>
      </div>
    </div>
  );
}

/* ---------- taskbars ---------- */

const apps: { icon: Icon; run?: boolean; s: number; b: number }[] = [
  { icon: FolderIcon, run: true, s: 20, b: 23 },
  { icon: StoreIcon, s: 21, b: 23 },
  { icon: GiftIcon, s: 21, b: 24 },
  { icon: NotepadIcon, run: true, s: 20, b: 23 },
  { icon: EdgeIcon, run: true, s: 19, b: 21 },
  { icon: FirefoxIcon, s: 20, b: 23 },
  { icon: SwirlIcon, s: 19, b: 22 },
  { icon: ExcelIcon, run: true, s: 20, b: 22 },
  { icon: WordIcon, run: true, s: 20, b: 22 },
  { icon: GitHubIcon, run: true, s: 21, b: 24 },
  { icon: RecorderIcon, run: true, s: 21, b: 24 },
];

function InnerTaskbar() {
  return (
    <div className="flex h-[36px] bg-[#0f1d22] pr-[9px] font-['Open_Sans',sans-serif] text-white">
      <div className="flex h-full w-[43px] items-center justify-center"><WindowsIcon size={15} /></div>
      <div className="flex h-full w-[43px] items-center justify-center"><SearchGlyph size={15} /></div>
      <div className="flex h-full w-[42px] items-center justify-center"><TaskViewGlyph size={14} /></div>
      <div className="ml-[3px] flex h-full w-[43px] items-center justify-center border-b-2 border-[#f6d5a2] bg-[#41514f] pt-[2px]"><ChromeIcon size={20} /></div>
      {apps.map(({ icon: I, run, s }, i) => (
        <div key={i} className="flex h-full w-[43.750px] justify-center">
          <div className={`flex w-[36px] items-center justify-center border-b-2 pt-[2px] ${run ? "border-[#f6d5a2]" : "border-transparent"}`}><I size={s} /></div>
        </div>
      ))}
      <div className="flex h-full w-[43.750px] justify-center">
        <div className="flex w-[36px] items-center justify-center border-b-2 border-[#f6d5a2] pt-[2px]"><GlobeIcon size={17} /></div>
      </div>
      <div className="ml-auto flex items-center *:flex *:justify-center">
        <span className="mr-[14px]"><PeopleGlyph size={14} /></span>
        <span className="w-[21.300px]"><ChevronGlyph size={12} /></span>
        <span className="w-[21.300px]"><GreenRecorder size={14} /></span>
        <span className="w-[21.300px]"><MonitorGlyph size={15} /></span>
        <span className="w-[21.300px]"><CloudGlyph size={15} /></span>
        <span className="w-[21.300px]"><OneDriveSync size={15} /></span>
        <span className="w-[21.300px]"><BatteryGlyph size={15} /></span>
        <span className="w-[21.300px]"><MutedGlyph size={14} /></span>
        <span className="ml-[6px] w-[19px] text-[10px] tracking-[-0.400px]">ESP</span>
        <div className="ml-[11px] w-[54px] flex-col items-center text-[10.200px] leading-[16px] tracking-[-0.200px] whitespace-nowrap"><span>12:09</span><span>18-12-2018</span></div>
        <span className="mt-[4px] ml-[16px]"><NotificationGlyph size={22} /></span>
      </div>
    </div>
  );
}

function OuterTaskbar() {
  return (
    <div className="flex h-[40px] bg-[linear-gradient(to_right,#10202a,#17242a_30%,#141d20_60%,#0f181c_90%)] font-['Open_Sans',sans-serif] text-white">
      <div className="flex h-full w-[48px] items-center justify-center"><WindowsIcon size={17} /></div>
      <div className="flex h-full w-[48px] items-center justify-center"><SearchGlyph size={17} /></div>
      <div className="flex h-full w-[48px] items-center justify-center"><TaskViewGlyph size={16} /></div>
      {[{ icon: ChromeIcon, run: true, s: 22, b: 22 }, ...apps].map(({ icon: I, run, b }, i) => (
        <div key={i} className={`flex h-full w-[49px] justify-center ${i === 0 ? "ml-[2px]" : ""}`}>
          <div className={`flex w-[40px] items-center justify-center border-b-2 pt-[2px] ${run ? "border-[#f6d5a2]" : "border-transparent"}`}><I size={b} /></div>
        </div>
      ))}
      <div className="ml-[14px] flex h-full w-[48px] items-center justify-center border-b-2 border-[#f6d5a2] bg-[#464b4e] pt-[2px]"><RecorderIcon size={24} /></div>
      <div className="ml-auto flex items-center *:flex *:justify-center">
        <span className="mr-[15px]"><PeopleGlyph size={16} /></span>
        <span className="w-[24px]"><ChevronGlyph size={13} /></span>
        <span className="w-[24px]"><MonitorGlyph size={17} /></span>
        <span className="w-[24px]"><CloudGlyph size={17} /></span>
        <span className="w-[24px]"><OneDriveSync size={17} /></span>
        <span className="w-[24px]"><BatteryGlyph size={17} /></span>
        <span className="w-[24px]"><MutedGlyph size={16} /></span>
        <span className="ml-[8px] w-[20px] text-[11px] tracking-[-0.400px]">ESP</span>
        <div className="ml-[14px] w-[60px] flex-col items-center text-[11.500px] leading-[18.500px] tracking-[-0.200px] whitespace-nowrap"><span>12:13</span><span>18-12-2018</span></div>
        <span className="mt-[4px] ml-[17px]"><NotificationGlyph size={25} /></span>
        <span className="ml-[11px] h-[40px] w-px bg-[#596064]" />
        <span className="w-[4px]" />
      </div>
    </div>
  );
}

function Player() {
  return (
    <div className="flex h-[20px] items-center bg-[#dcdcdc]">
      <div className="flex h-full w-[120px] items-center bg-[linear-gradient(to_bottom,#f4f4f4,#cfcfcf)] pl-[5px]">
        <svg width="12" height="12" viewBox="0 0 12 12"><path d="M0 .5L12 6 0 11.500z" /></svg>
        <span className="ml-[4px] flex h-[18px] w-[19px] items-center justify-center rounded-[2px] border border-[#9c4a10] bg-[linear-gradient(to_bottom,#ffffff,#fff6b0_50%,#ffe838)]">
          <svg width="9" height="12" viewBox="0 0 9 12"><path d="M0 0h3v12H0zM6 0h3v12H6z" /></svg>
        </span>
        <svg width="12" height="10" viewBox="0 0 12 10" className="ml-[5px]"><path d="M0 0l6 5-6 5zM6 0l6 5-6 5z" /></svg>
        <svg width="9" height="10" viewBox="0 0 10 10" className="ml-[9px]"><path d="M0 0h2v10H0zM3.500 0L10 5l-6.500 5z" /></svg>
        <span className="ml-[6px] flex h-[18px] w-[18px] items-center justify-center rounded-[2px] border border-[#9c4a10] bg-[linear-gradient(to_bottom,#fffbe0,#ffe838)]">
          <svg width="13" height="13" viewBox="0 0 13 13"><path d="M.5.500h12v12H.5z" fill="none" stroke="#111" /><path d="M2.500 5V2.500H5M8 2.500h2.500V5M10.500 8v2.500H8M5 10.500H2.500V8M3 3l2.500 2.500M10 3L7.500 5.500M10 10L7.500 7.500M3 10l2.500-2.500" fill="none" stroke="#111" /></svg>
        </span>
        <span className="ml-[4px] flex h-[13px] w-[13px] items-center justify-center border border-[#222] font-['Liberation_Sans',sans-serif] text-[9px] leading-none tracking-[-0.500px] text-black">1:1</span>
      </div>
      <div className="flex h-full w-[99px] items-center justify-center border-l border-[#bbb] bg-[linear-gradient(to_bottom,#fcfbe6,#fbf8bb)] font-['DejaVu_Sans',sans-serif] text-[9px] tracking-[-0.250px] text-black"><span className="mt-[2px]">00:04/02:19</span></div>
      <div className="relative ml-[11px] h-[4px] w-[1106px] border-t border-[#3c3c3c] bg-[#969696]">
        <span className="absolute -top-[4px] left-[26px] h-[10px] w-[16px] rounded-[4px] border border-[#444] bg-[linear-gradient(to_bottom,#f5f5f5,#9a9a9a)]" />
      </div>
      <div className="ml-auto flex h-full w-[20px] items-center justify-center bg-[#efefef]">
        <svg width="13" height="13" viewBox="0 0 13 13"><circle cx="6.500" cy="6.500" r="6.300" /><path d="M5.500 2.300h2v1.700h-2zM5 5.200h2.500v4.600h.8v1H5v-1h.6V6.200H5z" fill="#fff" /></svg>
      </div>
    </div>
  );
}

function Overlay() {
  return (
    <>
      <svg width="345" height="195" viewBox="0 0 345 195" className="pointer-events-none absolute top-[110px] left-[225px]">
        <defs><filter id="soft" x="-10%" y="-10%" width="120%" height="120%"><feGaussianBlur stdDeviation="1.800" /></filter></defs>
        <g transform="translate(4.500 5.500)" filter="url(#soft)" opacity=".4">
          <path d="M322 12L32 158" stroke="#000" strokeWidth="4.500" />
          <path d="M16 167l13-19 10 19z" fill="#000" />
        </g>
        <path d="M322 12L32 158" stroke="#fb0000" strokeWidth="4.500" />
        <path d="M16 167l13-19 10 19z" fill="#fb0000" />
      </svg>
      <svg width="12" height="19" viewBox="0 0 12 19" className="absolute top-[287px] left-[234px]"><path d="M.7.800v14l3.200-3 2.300 5.700 2.300-1-2.300-5.500h4.600z" fill="#fff" stroke="#111" strokeWidth="1" /></svg>
      <svg width="12" height="12" viewBox="0 0 12 12" className="absolute top-[90px] left-[669px]">
        <g strokeWidth="1.400">
          <path d="M6 0v3M8.500 1L7.700 3.200M11 3.300L9 4.800M12 6.500H9" stroke="#bfc3bf" />
          <path d="M11 9.500L8.800 8M8 12L7.300 9.300" stroke="#8a8e8a" />
          <path d="M5 12l.5-3M1.500 10.500L3.700 8.300M0 7.500l3-.8M.5 4L3 5M2.500 1.300L4.300 3.500" stroke="#5a5e5a" />
        </g>
      </svg>
    </>
  );
}

export default function App() {
  return (
    <div className="relative h-[768px] w-[1366px] overflow-hidden bg-black">
      <div className="flex h-[23px] items-center bg-white pr-[19px] pl-[2px]">
        <RecorderIcon size={16} />
        <span className="ml-[5px] font-['Open_Sans',sans-serif] text-[11.800px] leading-[16px] tracking-[-0.300px] text-black">Untittle</span>
        <div className="mb-[3px] ml-auto"><WindowButtons gap="gap-[35px]" /></div>
      </div>
      <div className="ml-[74px] h-[685px] w-[1213px] overflow-hidden">
        <Chrome />
        <PageBody />
        <InnerTaskbar />
      </div>
      <Player />
      <OuterTaskbar />
      <Overlay />
    </div>
  );
}
